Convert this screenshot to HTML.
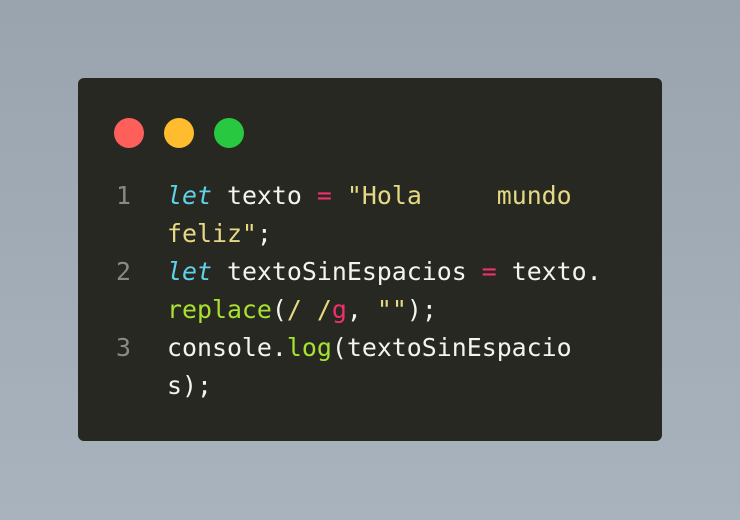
<!DOCTYPE html>
<html><head><style>
html,body{margin:0;padding:0}
body{width:740px;height:520px;background:linear-gradient(180deg,#9aa4ae 0%,#a9b3bd 100%);position:relative;overflow:hidden}
.card{position:absolute;left:78px;top:78px;width:584px;height:363px;background:#282823;border-radius:6px}
.dot{position:absolute;top:40px;width:30px;height:30px;border-radius:50%}
pre{position:absolute;left:0;top:99px;margin:0;font-family:"DejaVu Sans Mono","Liberation Mono",monospace;font-size:24.9px;line-height:38px;color:#f4f4ee}
.n{color:#8a8a85;display:inline-block;width:89px;text-align:left;padding-left:38px;box-sizing:border-box}
.k{color:#5fd2e8;font-style:italic}
.o{color:#f0306a}
.s{color:#e5d983}
.f{color:#a6e22e}
</style></head><body>
<div class="card">
<div class="dot" style="left:36px;background:#fe5f5a"></div>
<div class="dot" style="left:86px;background:#febc2e"></div>
<div class="dot" style="left:136px;background:#28c840"></div>
<pre><span class="n">1</span><span class="k">let</span> texto <span class="o">=</span> <span class="s">"Hola     mundo</span>
<span class="n"></span><span class="s">feliz"</span>;
<span class="n">2</span><span class="k">let</span> textoSinEspacios <span class="o">=</span> texto.
<span class="n"></span><span class="f">replace</span>(<span class="s">/ /</span><span class="o">g</span>, <span class="s">""</span>);
<span class="n">3</span>console.<span class="f">log</span>(textoSinEspacio
<span class="n"></span>s);</pre>
</div>
</body></html>
